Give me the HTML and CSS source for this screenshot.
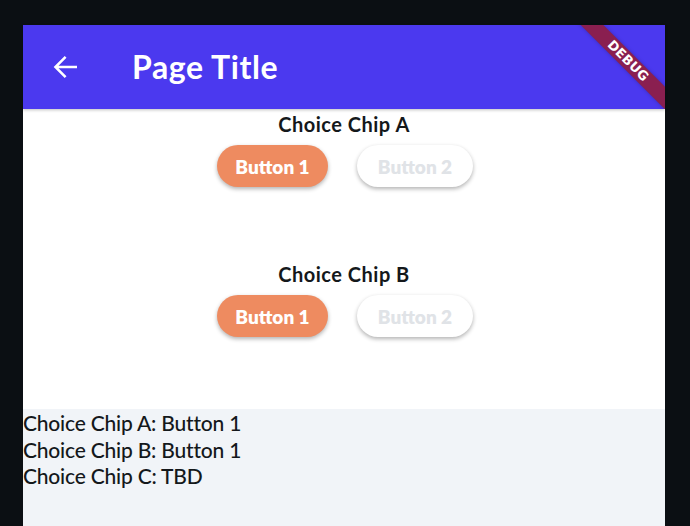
FILE: index.html
```html
<!DOCTYPE html>
<html>
<head>
<meta charset="utf-8">
<link rel="stylesheet" href="styles.css">
</head>
<body>
<div class="frame">
  <header class="appbar">
    <svg class="back" width="36" height="36" viewBox="0 0 24 24"><path d="M20 11.15H7.7l5.3-5.3-1.2-1.2L4.45 12l7.35 7.35 1.2-1.2-5.3-5.3H20z" fill="#fff"/></svg>
    <h1 class="title">Page Title</h1>
    <div class="debug"><span>DEBUG</span></div>
  </header>
  <main class="content">
    <section class="group">
      <div class="label">Choice Chip A</div>
      <div class="chips">
        <div class="chip chip-on">Button 1</div>
        <div class="chip chip-off">Button 2</div>
      </div>
    </section>
    <section class="group">
      <div class="label">Choice Chip B</div>
      <div class="chips">
        <div class="chip chip-on">Button 1</div>
        <div class="chip chip-off">Button 2</div>
      </div>
    </section>
  </main>
  <footer class="status">
    <div>Choice Chip A: Button 1</div>
    <div>Choice Chip B: Button 1</div>
    <div>Choice Chip C: TBD</div>
  </footer>
</div>
</body>
</html>
```

FILE: styles.css
```css
* { box-sizing: border-box; }
html, body { margin: 0; height: 100%; }
body {
  background: #0b0f13;
  font-family: "Lato", "Inter", sans-serif;
  overflow: hidden;
}
.frame {
  margin: 25px 0 0 23px;
  width: 642px;
  height: 501px;
  display: flex;
  flex-direction: column;
  background: #f1f4f8;
}
.appbar {
  position: relative;
  height: 84px;
  flex: none;
  background: #4b39ef;
  display: flex;
  align-items: center;
  padding-left: 24px;
  overflow: hidden;
  box-shadow: 0 1px 3px rgba(0,0,0,0.25);
  z-index: 1;
}
.back { flex: none; }
.title {
  margin: 0 0 0 49px;
  color: #fff;
  font-size: 32px;
  font-weight: 700;
  letter-spacing: 0.6px;
  padding-bottom: 2px;
}
.debug {
  position: absolute;
  top: 0;
  right: 0;
  width: 120px;
  height: 120px;
  overflow: hidden;
}
.debug span {
  position: absolute;
  top: 28px;
  left: -17px;
  width: 200px;
  height: 16px;
  line-height: 16px;
  transform: rotate(45deg);
  background: #8a1f50;
  color: #fff;
  font-family: "DejaVu Sans", sans-serif;
  font-size: 13px;
  font-weight: 700;
  text-align: center;
  letter-spacing: 0.2px;
  box-shadow: 0 0 4px rgba(0,0,0,0.25);
}
.content {
  height: 300px;
  flex: none;
  background: #fff;
  display: flex;
  flex-direction: column;
  align-items: center;
  padding-top: 2px;
  gap: 74px;
}
.group {
  display: flex;
  flex-direction: column;
  align-items: center;
  gap: 8px;
}
.label {
  font-size: 20px;
  font-weight: 700;
  color: #14181b;
  line-height: 26px;
  letter-spacing: 0.5px;
}
.chips {
  display: flex;
  gap: 29px;
  padding-left: 2px;
}
.chip {
  height: 42px;
  border-radius: 21px;
  display: flex;
  align-items: center;
  justify-content: center;
  font-size: 19px;
  font-weight: 800;
  box-shadow: 0 2px 4px rgba(0,0,0,0.3);
}
.chip-on {
  width: 111px;
  background: #ee8b60;
  color: #fff;
}
.chip-off {
  width: 116px;
  background: #fff;
  color: #e0e3e7;
}
.status {
  flex: 1;
  padding-top: 1px;
  font-size: 21px;
  line-height: 26.5px;
  color: #14181b;
  font-weight: 500;
  letter-spacing: -0.2px;
}
```
